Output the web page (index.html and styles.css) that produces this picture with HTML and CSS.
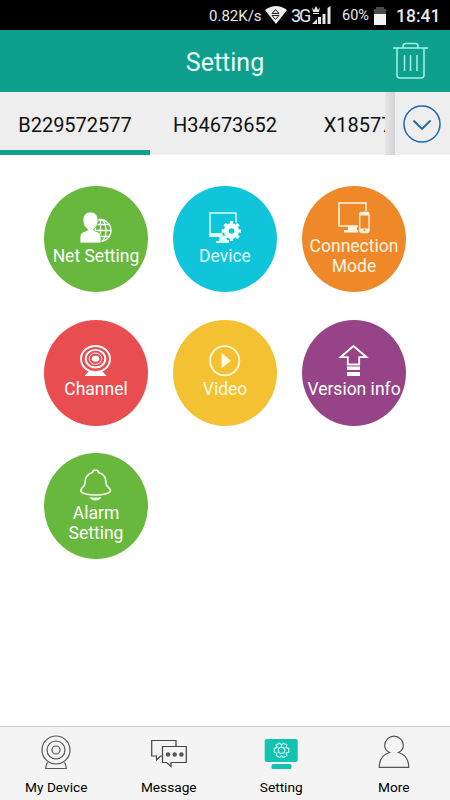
FILE: index.html
```html
<!DOCTYPE html>
<html lang="en">
  <head>
    <meta charset="utf-8">
    <meta name="viewport" content="width=device-width, initial-scale=1.0">
    <title>Setting</title>
    <link rel="stylesheet" href="styles.css">
  </head>
  <body>

    <!-- Status bar -->
    <div class="status-bar">
      <span class="speed">0.82K/s</span>
      <svg class="wifi" width="24" height="20" viewBox="0 0 24 20">
        <path d="M1 5Q12 -3 23 5L12 19Z" fill="#eee"/>
        <path d="M8 8.500L11.500 4.500L15 8.500ZM8 10.500L11.500 14.500L15 10.500Z" fill="none" stroke="#222" stroke-width="1"/>
      </svg>
      <span class="network">3G</span>
      <svg class="signal" width="20" height="20" viewBox="0 0 20 20">
        <path d="M0 19L5 14V19ZM6 12H9V19H6ZM10.500 9H13.500V19H10.500ZM15.500 3L18.500 1V19H15.500Z" fill="#e8e8e8"/>
        <path d="M0 2L2 5L4 1L6 5L8 2L7 7H1ZM1 8H7V9H1Z" fill="#e8e8e8"/>
      </svg>
      <span class="percent">60%</span>
      <svg class="battery" width="12" height="18" viewBox="0 0 12 18">
        <path d="M2 0H10V2H12V7H0V2H2Z" fill="#4b4b4b"/>
        <path d="M0 7H12V18H0Z" fill="#f4f4f4"/>
      </svg>
      <span class="clock">18:41</span>
    </div>

    <!-- Title bar -->
    <div class="header">
      <h1>Setting</h1>
      <svg class="trash" width="36" height="38" viewBox="0 0 36 38" fill="none" stroke="#a5f3e4" stroke-width="1.500">
        <path d="M0 6H35M10 6V4Q10 1.500 13 1.500H22Q25 1.500 25 4V6M4 6V33Q4 36 7 36H28Q31 36 31 33V6M11.500 13V29M17.500 13V29M24 13V29"/>
      </svg>
    </div>

    <!-- Device tabs -->
    <div class="tabs">
      <div class="tab-list">
        <div class="tab active">B229572577</div>
        <div class="tab">H34673652</div>
        <div class="tab">X18577352</div>
      </div>
      <div class="tab-shadow"></div>
      <div class="tab-more">
        <svg width="38" height="38" viewBox="0 0 38 38" fill="none" stroke="#1c68b3">
          <circle cx="19" cy="19" r="18" stroke-width="1.500"/>
          <path d="M10.500 15.500L19 24L27.500 15.500" stroke-width="1.900"/>
        </svg>
      </div>
    </div>

    <!-- Setting buttons -->
    <div class="grid">
      <div class="circle green">
        <svg width="32" height="32" viewBox="0 0 32 32">
          <g fill="none" stroke="#fff" stroke-width="1.300">
            <circle cx="20" cy="18.500" r="11"/>
            <ellipse cx="20.500" cy="18.500" rx="5.500" ry="11"/>
            <path d="M20.500 7V30M10 18.500H31M12 12.500H29M12 24.500H29"/>
          </g>
          <path d="M0 31V25Q0 20 6 19L8 17.500Q3 14.500 3 8.500C3 3 6 0 10.500 0S18 3 18 8.500Q18 14.500 13 17.500L15 19Q21 20 21 25V31Z" fill="#fff" stroke="#68b83e" stroke-width=".8"/>
        </svg>
        <span>Net Setting</span>
      </div>
      <div class="circle cyan">
        <svg width="32" height="32" viewBox="0 0 32 32">
          <path d="M1 1H27V24H1Z" fill="none" stroke="#dffcff" stroke-width="1.500"/>
          <path d="M0 21H17V25H0ZM10 25H18L20 28V31H7V29H10Z" fill="#dffcff"/>
          <circle cx="22.500" cy="19" r="9.600" fill="#10c4d9"/>
          <g fill="none" stroke="#effeff">
            <circle cx="22.500" cy="19" r="5.200" stroke-width="5"/>
            <circle cx="22.500" cy="19" r="8.200" stroke-width="3.400" pathLength="16" stroke-dasharray="1 1" stroke-dashoffset=".5"/>
          </g>
        </svg>
        <span>Device</span>
      </div>
      <div class="circle orange">
        <svg width="32" height="32" viewBox="0 0 32 32">
          <path d="M1 1H28V24H1Z" fill="none" stroke="#fff4df" stroke-width="1.600"/>
          <path d="M10 24H19V28H22V30.500H6V28H10Z" fill="#fff4df"/>
          <rect x="20" y="9" width="12" height="22" fill="#ef8829"/>
          <rect x="21.700" y="10.500" width="9.300" height="20" rx="1.500" fill="#ef8829" stroke="#fff4df" stroke-width="1.300"/>
          <path d="M22 11H31V13.500H22ZM22 26.500H31V30H22Z" fill="#fff4df"/>
          <circle cx="26.500" cy="28.300" r="1" fill="#ef8829"/>
        </svg>
        <span>Connection<br>Mode</span>
      </div>
      <div class="circle red">
        <svg width="32" height="32" viewBox="0 0 32 32">
          <path d="M9 26Q15.500 29 22 26L26.500 31H4.500Z" fill="#fff"/>
          <g fill="none" stroke="#fff" stroke-width="1.900">
            <ellipse cx="15.500" cy="14" rx="14.500" ry="13" fill="#e84d4f"/>
            <ellipse cx="15.500" cy="13.700" rx="9.800" ry="8.800"/>
          </g>
          <ellipse cx="15.500" cy="13.700" rx="6.300" ry="5.700" fill="none" stroke="#fff" stroke-width="1"/>
          <ellipse cx="15.500" cy="13.700" rx="3.800" ry="3" fill="#fff"/>
        </svg>
        <span>Channel</span>
      </div>
      <div class="circle yellow">
        <svg width="32" height="32" viewBox="0 0 32 32">
          <circle cx="15.700" cy="15.700" r="14.600" fill="none" stroke="#fffbe0" stroke-width="1.800"/>
          <path d="M12.500 8L22 15.700L12.500 23.500Z" fill="#fffbe0"/>
        </svg>
        <span>Video</span>
      </div>
      <div class="circle purple">
        <svg width="32" height="32" viewBox="0 0 32 32">
          <path d="M15.500 1L28.500 12.200H21.200V19.500H9.800V12.200H2.500Z" fill="none" stroke="#fff" stroke-width="1.800"/>
          <path d="M9 21.500H22V25H9ZM9 27H22V31H9Z" fill="#fff"/>
        </svg>
        <span>Version info</span>
      </div>
      <div class="circle green">
        <svg width="32" height="32" viewBox="0 0 32 32">
          <path d="M12.500 3.500Q12.500 1 15.500 1T18.500 3.500C24 5 26 9 26 14C26 18 30 18.500 30.500 21.500C30.500 24 24 26 15.500 26S.7 24 .7 21.500C1 18.500 5 18 5 14C5 9 7 5 12.500 3.500Z" fill="none" stroke="#f2ffe9" stroke-width="1.600"/>
          <path d="M9.500 28Q15.500 29 21.500 28Q19.500 31.500 15.500 31.500T9.500 28Z" fill="#f2ffe9"/>
        </svg>
        <span>Alarm<br>Setting</span>
      </div>
    </div>

    <!-- Bottom navigation -->
    <div class="nav">
      <div class="nav-item">
        <svg width="36" height="36" viewBox="0 0 36 36" fill="none" stroke="#555" stroke-width="1.200">
          <circle cx="18" cy="15" r="14"/>
          <circle cx="18" cy="15" r="9"/>
          <circle cx="18" cy="15" r="4"/>
          <path d="M9.500 27.500Q8 29 7.700 33.500H28.300Q28 29 26.500 27.500"/>
        </svg>
        <span>My Device</span>
      </div>
      <div class="nav-item">
        <svg width="36" height="36" viewBox="0 0 36 36" fill="none" stroke="#444" stroke-width="1.200">
          <path d="M11 21H9.500L5.500 25V21H.7V5.500H25V11"/>
          <path d="M11.500 11.500H35.300V27.500H20V31.500L15.500 27.500H11.500Z"/>
          <g fill="#555" stroke="none">
            <circle cx="17" cy="19.500" r="2.200"/>
            <circle cx="23.700" cy="19.500" r="2.200"/>
            <circle cx="30.400" cy="19.500" r="2.200"/>
          </g>
        </svg>
        <span>Message</span>
      </div>
      <div class="nav-item">
        <svg width="36" height="36" viewBox="0 0 36 36">
          <rect x="1.700" y="4" width="33" height="23" rx="2" fill="#12c3b1"/>
          <rect x="8.500" y="29" width="20" height="5" rx="1.500" fill="#12c3b1"/>
          <g fill="none" stroke="#c8fff7" stroke-width="1.200">
            <circle cx="18.500" cy="15.300" r="3.200"/>
            <path d="M25.700 13.400V17.200L23.100 18L23.800 20.600L20.400 22.500L18.500 20.600L16.600 22.500L13.200 20.600L13.900 18L11.300 17.200V13.400L13.900 12.600L13.200 10L16.600 8.100L18.500 10L20.400 8.100L23.800 10L23.100 12.600Z" stroke-linejoin="round"/>
          </g>
        </svg>
        <span>Setting</span>
      </div>
      <div class="nav-item">
        <svg width="36" height="36" viewBox="0 0 36 36" fill="none" stroke="#555" stroke-width="1.200">
          <path d="M13.500 17.500C6.500 19.500 3.300 25 3.300 32.300H32.700C32.700 25 29.500 19.500 22.500 17.500C25.500 16 27.300 13.500 27.300 10.500A9.300 9.300 0 0 0 8.700 10.500C8.700 13.500 10.500 16 13.500 17.500Z"/>
        </svg>
        <span>More</span>
      </div>
    </div>

  </body>
</html>
```
FILE: styles.css
```css
* {
  box-sizing: border-box;
}

body {
  font-family: Roboto, sans-serif;
  background-color: #fff;
  margin: 0;
  height: 100vh;
  display: flex;
  flex-direction: column;
  overflow: hidden;
}

svg {
  display: block;
  flex-shrink: 0;
}

.status-bar {
  height: 30px;
  flex-shrink: 0;
  display: flex;
  align-items: center;
  background-color: #000;
  color: #e8e8e8;
  padding-left: 209px;
  padding-top: 1px;
  white-space: nowrap;
}

.speed {
  width: 55px;
  font-size: 15px;
}

.wifi {
  margin-top: -1px;
}

.network {
  width: 21px;
  margin-left: 3px;
  font-size: 18px;
  letter-spacing: -2px;
}

.signal {
  margin-top: -2px;
}

.percent {
  width: 32px;
  margin-left: 10px;
  font-size: 14.500px;
}

.clock {
  margin-left: 10px;
  font-size: 17.500px;
  font-weight: 500;
}

.header {
  height: 62px;
  flex-shrink: 0;
  display: grid;
  grid-template-columns: 1fr auto 1fr;
  align-items: center;
  background-color: #0e9f8d;
  padding-right: 21px;
  padding-left: 21px;
}

.header h1 {
  grid-column: 2;
  margin: 2px 0 0;
  color: #eafffb;
  font-size: 25px;
  font-weight: 400;
}

.trash {
  justify-self: end;
}

.tabs {
  height: 63px;
  flex-shrink: 0;
  display: flex;
  background-color: #eee;
}

.tab-list {
  width: 385px;
  display: flex;
  overflow: hidden;
}

.tab {
  width: 150px;
  flex-shrink: 0;
  padding-top: 5px;
  border-bottom: 5px solid transparent;
  font-size: 20px;
  line-height: 57px;
  text-align: center;
  color: #111;
}

.tab.active {
  border-bottom-color: #0e9f8d;
}

.tab-shadow {
  width: 10px;
  background: linear-gradient(to right, #e6e6e6, #d2d2d2);
}

.tab-more {
  width: 55px;
  display: flex;
  align-items: center;
  justify-content: center;
  padding-right: 1px;
}

.grid {
  flex: 1;
  display: grid;
  grid-template-columns: repeat(3, 104px);
  grid-auto-rows: 106px;
  gap: 27.500px 25px;
  padding: 31px 44px 0;
}

.circle {
  display: flex;
  flex-direction: column;
  align-items: center;
  justify-content: center;
  gap: 2px;
  border-radius: 50%;
  color: #fff;
  font-size: 17.500px;
  line-height: 20.500px;
  text-align: center;
  white-space: nowrap;
}

.green {
  background-color: #68b83e;
}

.cyan {
  background-color: #10c4d9;
  color: #dffcff;
}

.orange {
  background-color: #ef8829;
  color: #fff4df;
}

.red {
  background-color: #e84d4f;
}

.yellow {
  background-color: #f4c132;
  color: #fffbe0;
}

.purple {
  background-color: #964388;
}

.nav {
  height: 74px;
  flex-shrink: 0;
  display: flex;
  background-color: #f4f4f4;
  border-top: 1px solid #ccc;
}

.nav-item {
  flex: 1;
  display: flex;
  flex-direction: column;
  align-items: center;
  padding-top: 8px;
  font-size: 13.700px;
  line-height: 18px;
  color: #000;
}

.nav-item span {
  margin-top: 7px;
}
```
